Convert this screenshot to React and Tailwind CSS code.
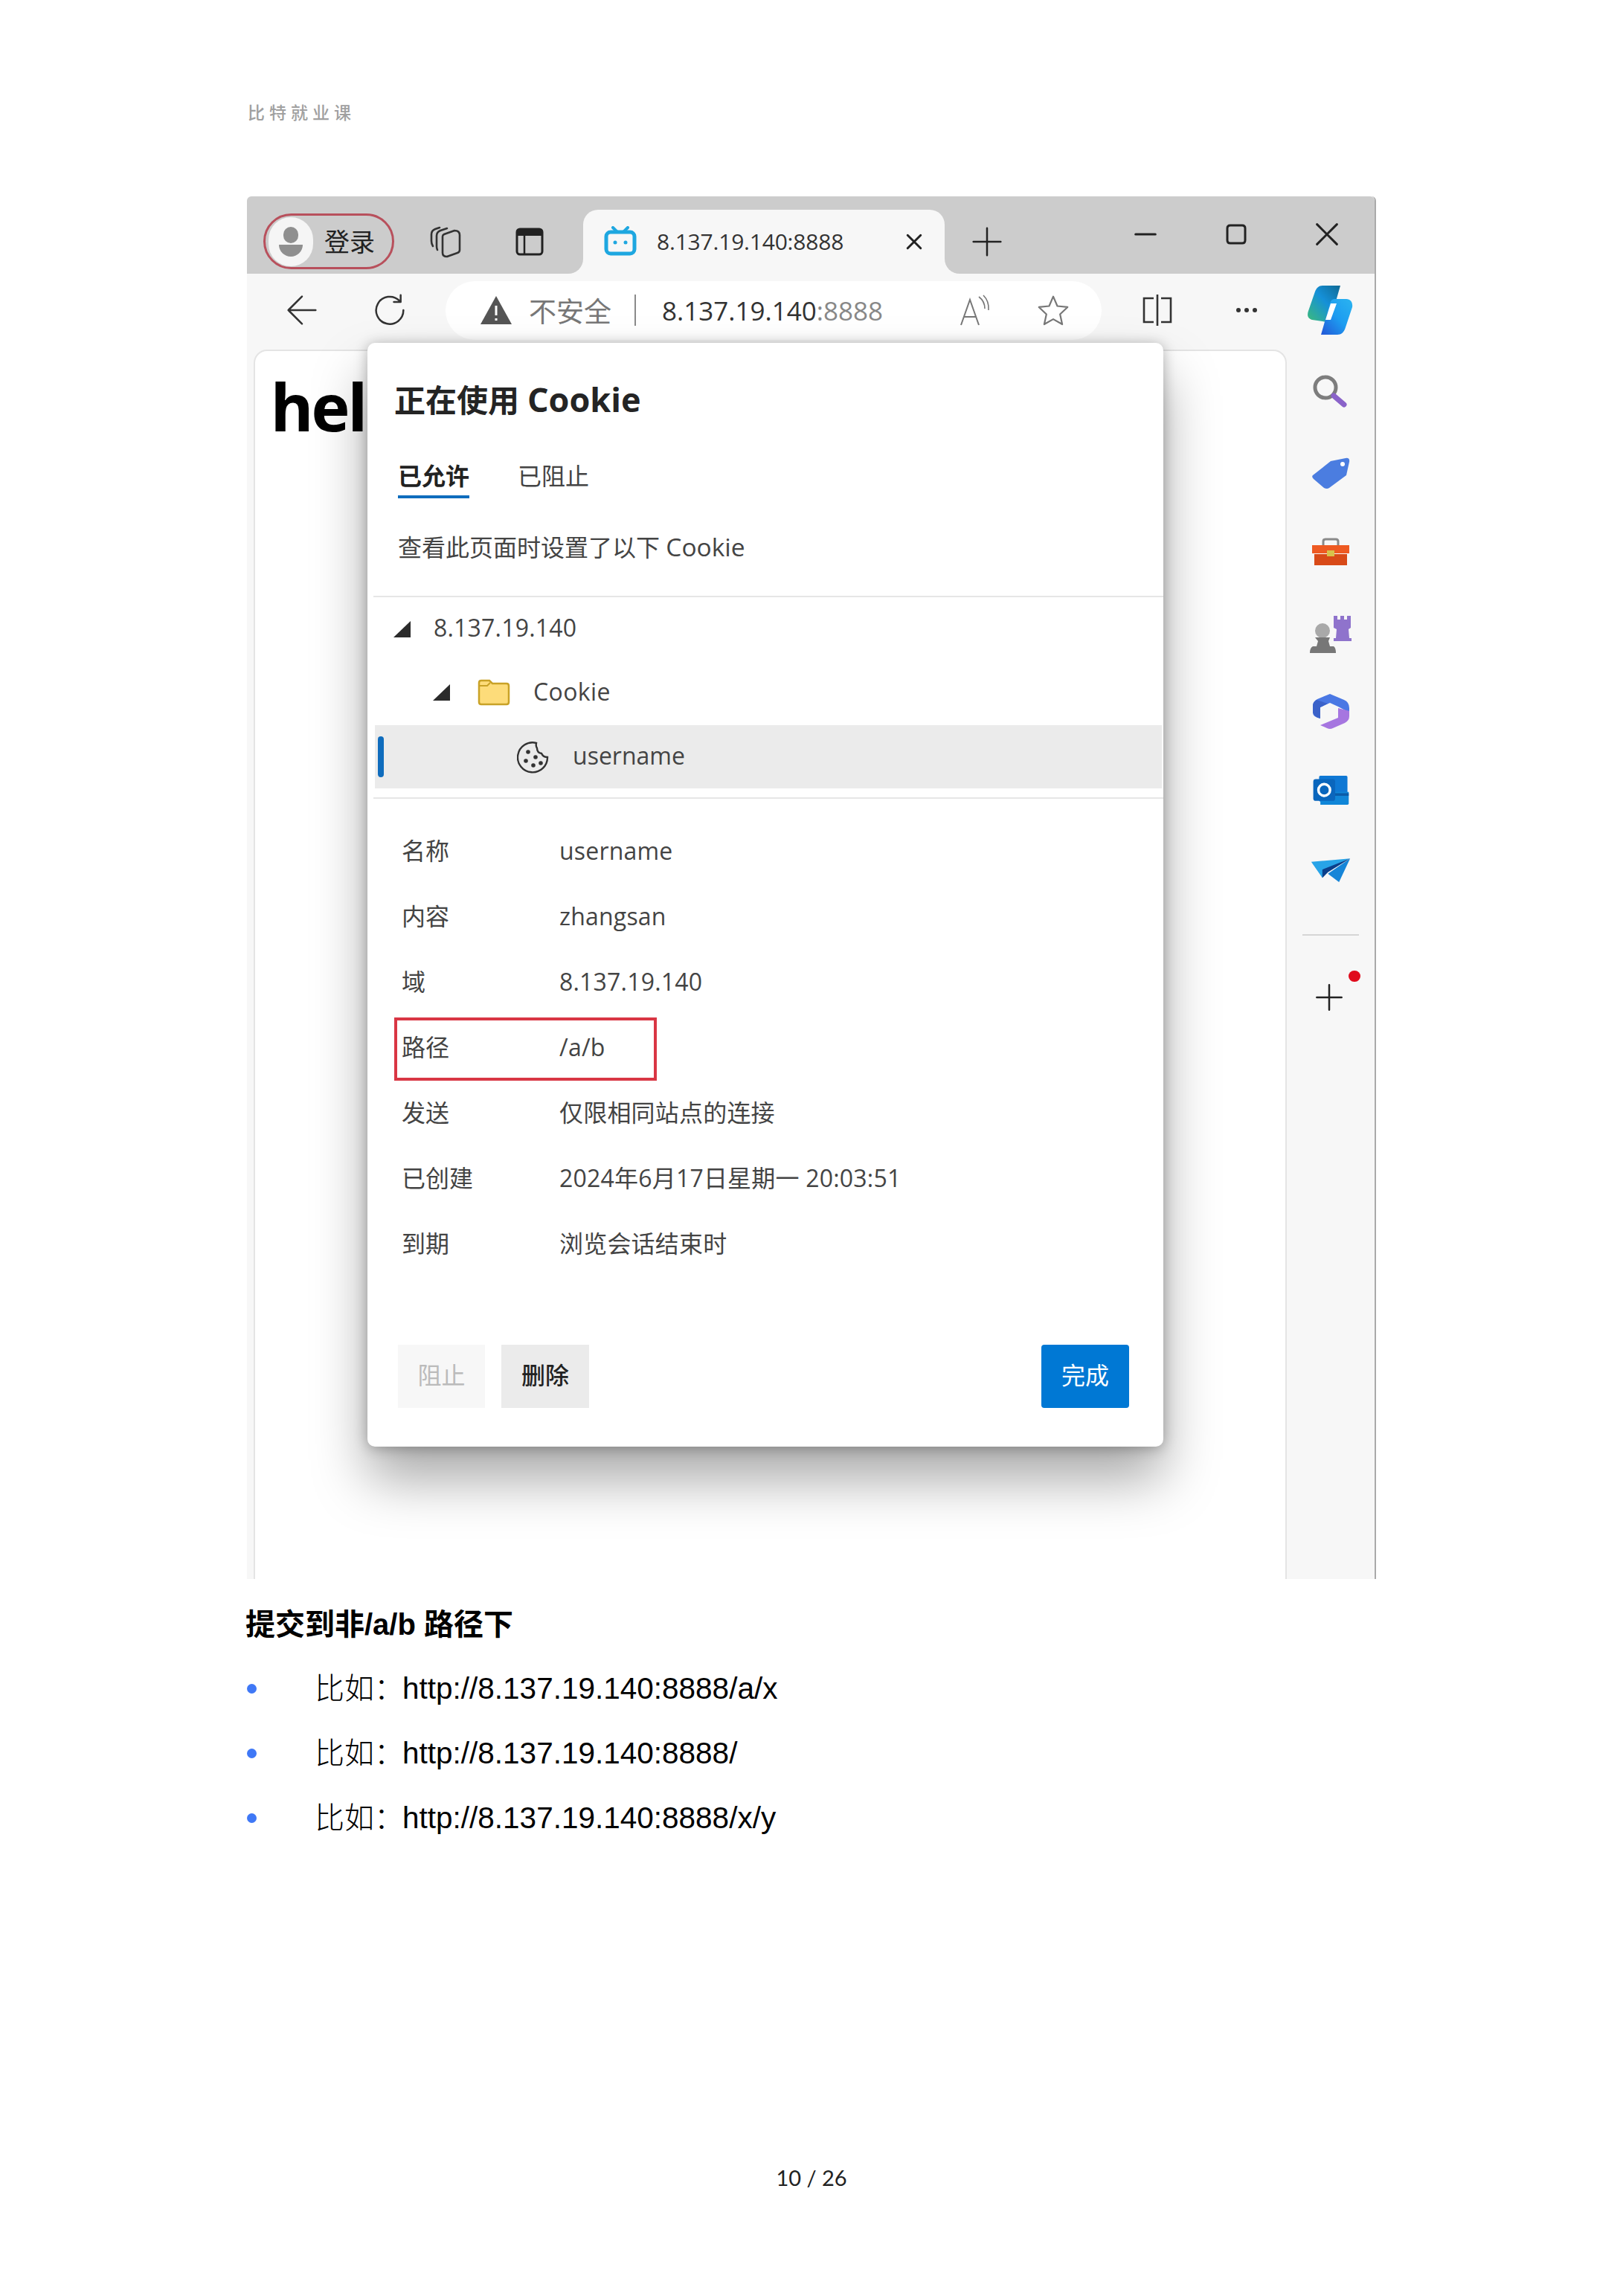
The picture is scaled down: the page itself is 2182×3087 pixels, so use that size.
import React from "react";

const Line = ({ d, size = 44, w = 2.5, color = "#333", box = 24 }) => (
  <svg width={size} height={size} viewBox={`0 0 ${box} ${box}`} fill="none" stroke={color} strokeWidth={w * (box / size)} strokeLinecap="round" strokeLinejoin="round" className="shrink-0">
    <path d={d} />
  </svg>
);

const Copilot = () => (
  <svg width="64" height="70" viewBox="0 0 64 70" className="shrink-0">
    <defs>
      <linearGradient id="cpA" x1="0" y1="1" x2="1" y2="0">
        <stop offset="0" stopColor="#3dbb7a" />
        <stop offset="0.55" stopColor="#1590d8" />
        <stop offset="1" stopColor="#0f6a94" />
      </linearGradient>
      <linearGradient id="cpB" x1="0" y1="1" x2="1" y2="0">
        <stop offset="0" stopColor="#2356d6" />
        <stop offset="0.5" stopColor="#1d9cf0" />
        <stop offset="1" stopColor="#2bb4f0" />
      </linearGradient>
    </defs>
    <path d="M22 2 H46 L34 44 C32 50 28 52 22 50 L8 48 C2 46 1 42 3 36 L12 10 C14 5 17 2 22 2 Z" fill="url(#cpA)" />
    <path d="M38 20 H54 C60 20 63 25 62 31 L53 58 C51 65 47 68 42 68 H20 L32 26 C33 22 35 20 38 20 Z" fill="url(#cpB)" />
    <path d="M33 26 L41 26 L33 48 L26 48 Z" fill="#fff" />
  </svg>
);

const SideIcons = () => [
  <svg key="search" width="56" height="56" viewBox="0 0 56 56">
    <circle cx="21" cy="21" r="14" fill="none" stroke="#7d7d7d" strokeWidth="5" />
    <path d="M32 32 L46 44" stroke="#8a63c9" strokeWidth="7" strokeLinecap="round" />
  </svg>,
  <svg key="tag" width="56" height="56" viewBox="0 0 56 56" className="mt-[2px]">
    <path d="M4 31 L28 12 L48 8 Q54 7 53 13 L49 31 L26 48 Q23 50 19 48 L5 36 Q2 33 4 31 Z" fill="#4b7de0" />
    <circle cx="44" cy="16" r="3" fill="#fff" />
  </svg>,
  <svg key="box" width="56" height="56" viewBox="0 0 56 56" className="mt-[4px]">
    <path d="M18 18 V12 Q18 9 21 9 H35 Q38 9 38 12 V18" fill="none" stroke="#8a8a8a" strokeWidth="3" />
    <path d="M3 17 H53 V28 H3 Z" fill="#ee5a22" />
    <path d="M6 29 H50 V44 H6 Z" fill="#d84a18" />
    <rect x="23" y="24" width="10" height="8" fill="#d8c24a" />
  </svg>,
  <svg key="chess" width="60" height="60" viewBox="0 0 60 60" className="mt-[6px]">
    <path d="M34 6 H39 V11 H43 V6 H48 V11 H52 V6 H57 V22 L54 24 L55 36 H58 V40 H34 V36 H37 L38 24 L34 22 Z" fill="#8f73cc" />
    <circle cx="19" cy="26" r="10" fill="#a9a9a9" />
    <path d="M9 35 H29 L27 40 L29 47 H34 Q37 49 37 56 H2 Q2 49 6 47 H11 L13 40 Z" fill="#777" />
  </svg>,
  <svg key="m365" width="56" height="56" viewBox="0 0 56 56">
    <path d="M27 5 L46 13 Q53 16 53 24 V30 L38 22 L27 17 L14 23 V38 Q4 36 4 30 V21 Q4 15 10 12 Z" fill="#4a78e4" />
    <path d="M4 30 Q6 36 14 38 L14 23 L24 18 L9 13 Q4 16 4 21 Z" fill="#3b62c9" />
    <path d="M53 28 V35 Q53 41 47 44 L31 51 Q27 53 23 51 L14 47 L38 37 V24 Z" fill="#a676e0" />
  </svg>,
  <svg key="outlook" width="52" height="52" viewBox="0 0 60 56">
    <rect x="12" y="5" width="44" height="40" rx="2" fill="#0f78d4" />
    <path d="M14 30 H58 V48 Q58 50 56 50 H14 Z" fill="#1086d8" />
    <path d="M30 32 L58 32 V36 L30 36 Z" fill="#0a5ca8" />
    <rect x="3" y="10" width="34" height="34" rx="4" fill="#0a66bd" />
    <ellipse cx="20" cy="27" rx="9" ry="9" fill="none" stroke="#fff" strokeWidth="4" />
  </svg>,
  <svg key="send" width="56" height="56" viewBox="0 0 60 56" className="mt-[2px]">
    <path d="M2 15 L58 10 L26 24 L18 38 Z" fill="#28a4e8" />
    <path d="M58 10 L42 44 L26 32 Z" fill="#1685d8" />
    <path d="M58 10 L18 26 L18 38 L26 30 Z" fill="#0b3f8a" />
  </svg>,
];

const Triangle = () => (
  <svg width="25" height="24" viewBox="0 0 25 24" className="shrink-0">
    <path d="M24 1 V23 H1 Z" fill="#2b2b2b" />
  </svg>
);

const detailRows = [
  ["名称", "username"],
  ["内容", "zhangsan"],
  ["域", "8.137.19.140"],
  ["路径", "/a/b"],
  ["发送", "仅限相同站点的连接"],
  ["已创建", "2024年6月17日星期一 20:03:51"],
  ["到期", "浏览会话结束时"],
];

const examples = ["http://8.137.19.140:8888/a/x", "http://8.137.19.140:8888/", "http://8.137.19.140:8888/x/y"];

export default function App() {
  return (
    <div className="w-[2182px] h-[3087px] bg-white flex flex-col font-['Liberation_Sans','Noto_Sans_CJK_SC',sans-serif] text-black overflow-hidden">
      <div className="ml-[333px] mt-[134px] h-[32px] leading-[32px] text-[23px] tracking-[6px] font-medium text-[#a0a0a0] font-['Noto_Sans_CJK_SC',sans-serif]">
        比特就业课
      </div>

      {/* browser screenshot */}
      <div className="relative ml-[332px] mt-[98px] w-[1518px] h-[1859px] flex flex-col bg-[#f7f7f7] border-r-2 border-[#aaaaaa] rounded-t-[6px] font-['Open_Sans','Noto_Sans_CJK_SC',sans-serif] text-[#333]">
        {/* tab strip */}
        <div className="h-[104px] shrink-0 flex items-start bg-[#cccccc] rounded-t-[6px]">
          <div className="ml-[22px] mt-[23px] w-[176px] h-[75px] rounded-full border-[3px] border-[#b8505c] flex items-center gap-[15px] pl-[4px]">
            <div className="w-[60px] h-[66px] rounded-full bg-[#f5f5f5] flex flex-col items-center justify-center gap-[2px]">
              <div className="w-[20px] h-[22px] rounded-full bg-[#8f8f8f]"></div>
              <div className="w-[32px] h-[16px] rounded-b-full bg-[#8f8f8f]"></div>
            </div>
            <span className="text-[34px] leading-none text-[#222]">登录</span>
          </div>

          <div className="ml-[47px] mt-[40px]">
            <svg width="46" height="44" viewBox="0 0 46 44" fill="none" stroke="#333" strokeWidth="2.6" strokeLinecap="round" strokeLinejoin="round">
              <path d="M18 14 Q18 12 20 11 L34 6 Q41 6 41 12 V32 Q41 35 38 36 L24 41 Q18 41 18 36 Z" />
              <path d="M11 32 Q10 30 10 27 V13 Q10 8 15 6 L24 3" />
              <path d="M5 27 Q3 24 3 20 V11 Q3 6 8 4 L14 2" />
            </svg>
          </div>
          <div className="ml-[69px] mt-[41px]">
            <svg width="40" height="40" viewBox="0 0 40 40">
              <rect x="3" y="3" width="34" height="34" rx="4" fill="none" stroke="#222" strokeWidth="3" />
              <path d="M3 7 Q3 3 7 3 H33 Q37 3 37 7 V12 H3 Z" fill="#222" />
              <path d="M13 12 V37" stroke="#222" strokeWidth="2.5" />
            </svg>
          </div>

          <div className="relative ml-[52px] mt-[18px] w-[486px] h-[86px] bg-[#f7f7f7] rounded-t-[20px] flex items-center">
            <div className="ml-[28px] mb-[2px]">
              <svg width="44" height="40" viewBox="0 0 44 40">
                <path d="M12 2 L18 8 M32 2 L26 8" stroke="#1ea7e0" strokeWidth="4" strokeLinecap="round" />
                <rect x="3" y="8" width="38" height="29" rx="6" fill="none" stroke="#1ea7e0" strokeWidth="5" />
                <circle cx="15" cy="22" r="2.5" fill="#1ea7e0" />
                <circle cx="29" cy="22" r="2.5" fill="#1ea7e0" />
              </svg>
            </div>
            <span className="ml-[27px] text-[30px] leading-none tracking-[-0.2px] text-[#333]">8.137.19.140:8888</span>
            <div className="ml-auto mr-[26px]">
              <Line size={30} w={3} color="#222" d="M5 5 L19 19 M19 5 L5 19" />
            </div>
            <div className="absolute left-[-20px] bottom-0 w-[20px] h-[20px] bg-[#f7f7f7]">
              <div className="w-full h-full bg-[#cccccc] rounded-br-[20px]"></div>
            </div>
            <div className="absolute right-[-20px] bottom-0 w-[20px] h-[20px] bg-[#f7f7f7]">
              <div className="w-full h-full bg-[#cccccc] rounded-bl-[20px]"></div>
            </div>
          </div>

          <div className="ml-[37px] mt-[41px]">
            <Line size={40} w={2.5} color="#222" d="M12 1 V23 M1 12 H23" />
          </div>
          <div className="ml-[177px] mt-[35px]">
            <Line size={32} w={3} color="#222" d="M2 12 H22" />
          </div>
          <div className="ml-[90px] mt-[35px]">
            <Line size={32} w={3} color="#222" d="M6 3 H18 Q21 3 21 6 V18 Q21 21 18 21 H6 Q3 21 3 18 V6 Q3 3 6 3 Z" />
          </div>
          <div className="ml-[90px] mt-[35px]">
            <Line size={32} w={3} color="#222" d="M2 2 L22 22 M22 2 L2 22" />
          </div>
        </div>

        {/* toolbar */}
        <div className="h-[102px] shrink-0 flex items-center pb-[4px]">
          <div className="ml-[52px]">
            <Line d="M22 12 H2 M12 2 L2 12 L12 22" w={2.5} />
          </div>
          <div className="ml-[74px]">
            <Line d="M19 5 A10 10 0 1 0 22 12 M20 1 V6 H15" w={2.5} />
          </div>
          <div className="ml-[53px] w-[882px] h-[79px] rounded-full bg-white flex items-center">
            <div className="ml-[46px]">
              <svg width="44" height="42" viewBox="0 0 44 40" className="shrink-0">
                <path d="M22 1 L43 39 H1 Z" fill="#555" />
                <path d="M22 14 V27 M22 31 V34" stroke="#fff" strokeWidth="3" />
              </svg>
            </div>
            <span className="ml-[22px] text-[37px] leading-none text-[#777] pt-[2px]">不安全</span>
            <div className="ml-[31px] w-[2px] h-[42px] bg-[#8a8a8a]"></div>
            <span className="ml-[35px] text-[35px] leading-none text-[#333]">
              8.137.19.140<span className="text-[#888]">:8888</span>
            </span>
            <div className="ml-auto flex items-center gap-[62px] pr-[43px]">
              <svg width="44" height="44" viewBox="0 0 44 44" fill="none" stroke="#777" strokeWidth="2">
                <path d="M4 42 L16 8 L28 42 M8 31 H24" />
                <path d="M28 4 Q36 10 36 20 M34 2 Q42 10 41 22" strokeWidth="1.6" />
              </svg>
              <Line d="M12 2 L15 9 L22.5 9.8 L17 15 L18.6 22.4 L12 18.6 L5.4 22.4 L7 15 L1.5 9.8 L9 9 Z" w={2.2} color="#777" />
            </div>
          </div>
          <div className="ml-[53px]">
            <svg width="44" height="44" viewBox="0 0 44 44" fill="none" stroke="#333" strokeWidth="2.6">
              <path d="M17 6 H4 V38 H17 M27 6 H40 V38 H27 M22 1 V43" />
            </svg>
          </div>
          <div className="ml-[78px] w-[40px] flex justify-center gap-[5px]">
            <div className="w-[6px] h-[6px] rounded-full bg-[#333]"></div>
            <div className="w-[6px] h-[6px] rounded-full bg-[#333]"></div>
            <div className="w-[6px] h-[6px] rounded-full bg-[#333]"></div>
          </div>
          <div className="ml-[60px]">
            <Copilot />
          </div>
        </div>

        {/* page + side bar */}
        <div className="flex-1 flex pl-[9px] min-h-0">
          <div className="w-[1389px] bg-white rounded-t-[18px] border-l-2 border-r-2 border-t-2 border-[#e4e4e4] pl-[21px] pt-[24px]">
            <div className="text-[88px] leading-[100px] tracking-[-3px] font-bold text-black font-['Noto_Sans',sans-serif]">hel</div>
          </div>
          <div className="w-[118px] flex flex-col items-center pt-[30px]">
            <div className="flex flex-col items-center gap-[51px]">
              {SideIcons().map((icon, i) => (
                <div key={i} className="h-[56px] flex items-center justify-center">
                  {icon}
                </div>
              ))}
            </div>
            <div className="mt-[58px] w-[76px] h-[2px] bg-[#d6d6d6]"></div>
            <div className="relative mt-[63px] mr-[4px]">
              <Line size={40} w={2.5} color="#222" d="M12 2 V22 M2 12 H22" />
              <div className="absolute left-[46px] top-[-16px] w-[16px] h-[15px] rounded-full bg-[#e00b1c]"></div>
            </div>
          </div>
        </div>

        {/* cookie dialog */}
        <div className="absolute left-[162px] top-[197px] w-[1070px] h-[1484px] bg-white rounded-[10px] shadow-[0_44px_72px_rgba(0,0,0,0.34),0_2px_18px_rgba(0,0,0,0.28)] flex flex-col">
          <div className="mt-[46px] ml-[36px] h-[60px] leading-[60px] text-[42px] font-semibold text-[#242424]">
            正在使用 <span className="text-[45px] font-bold">Cookie</span>
          </div>
          <div className="mt-[53px] ml-[41px] h-[50px] flex gap-[65px] text-[32px] leading-[40px]">
            <div className="w-[96px] h-[50px] border-b-[4px] border-[#0f6cbd] font-semibold text-[#222]">已允许</div>
            <div className="text-[#444]">已阻止</div>
          </div>
          <div className="mt-[45px] ml-[41px] h-[40px] leading-[40px] text-[32px] text-[#444]">
            查看此页面时设置了以下 <span className="text-[33.5px]">Cookie</span>
          </div>
          <div className="mt-[46px] ml-[8px] h-[2px] bg-[#e6e6e6]"></div>

          <div className="h-[85px] flex items-center text-[32px] text-[#444]">
            <div className="ml-[34px]">
              <Triangle />
            </div>
            <span className="ml-[30px] mb-[3px] tracking-[0.2px]">8.137.19.140</span>
          </div>
          <div className="h-[85px] flex items-center text-[32px] text-[#444]">
            <div className="ml-[87px]">
              <Triangle />
            </div>
            <svg width="44" height="38" viewBox="0 0 44 36" className="ml-[36px] shrink-0">
              <path d="M2 5 Q2 2 5 2 H16 L20 6 H39 Q42 6 42 9 V31 Q42 34 39 34 H5 Q2 34 2 31 Z" fill="#fddc7a" stroke="#c9a227" strokeWidth="2.5" />
              <path d="M2 9 H13 L17 5" fill="none" stroke="#c9a227" strokeWidth="2" />
            </svg>
            <span className="ml-[31px] mb-[2px] tracking-[0.4px]">Cookie</span>
          </div>
          <div className="relative mt-[2px] ml-[10px] mr-[2px] h-[85px] bg-[#ebebeb] flex items-center text-[32px] text-[#444]">
            <div className="absolute left-[4px] top-[15px] w-[8px] h-[55px] rounded-full bg-[#0f6cbd]"></div>
            <svg width="44" height="44" viewBox="0 0 44 44" className="ml-[191px] shrink-0" fill="none" stroke="#333" strokeWidth="2.4">
              <path d="M26 3 A20 20 0 1 0 41 22 Q35 22 33 17 Q27 16 27 10 Q25 7 26 3 Z" />
              <circle cx="15" cy="15" r="1.6" fill="#333" />
              <circle cx="25" cy="22" r="1.6" fill="#333" />
              <circle cx="12" cy="27" r="1.6" fill="#333" />
              <circle cx="22" cy="33" r="1.6" fill="#333" />
              <circle cx="32" cy="30" r="1.6" fill="#333" />
            </svg>
            <span className="ml-[31px] mb-[3px]">username</span>
          </div>
          <div className="mt-[12px] ml-[8px] h-[2px] bg-[#e6e6e6]"></div>

          <div className="mt-[26px] flex flex-col text-[32px] text-[#444]">
            {detailRows.map(([label, value]) => (
              <div key={label} className="relative h-[88px] flex items-center">
                <span className="ml-[46px] w-[212px] shrink-0">{label}</span>
                <span className="tracking-[0.2px]">{value}</span>
                {label === "路径" && (
                  <div className="absolute left-[36px] top-[4px] w-[353px] h-[85px] border-[4px] border-[#d93644]"></div>
                )}
              </div>
            ))}
          </div>

          <div className="mt-[92px] ml-[41px] mr-[46px] h-[85px] flex text-[32px] leading-[82px] text-center">
            <div className="w-[117px] bg-[#f7f7f7] text-[#bbb]">阻止</div>
            <div className="ml-[22px] w-[118px] bg-[#ebebeb] text-[#222] font-medium">删除</div>
            <div className="ml-auto w-[118px] rounded-[4px] bg-[#0078d4] text-white">完成</div>
          </div>
        </div>
      </div>

      <div className="ml-[330px] mt-[31px] h-[60px] leading-[60px] text-[40px] font-bold">提交到非/a/b 路径下</div>
      <div className="ml-[332px] mt-[26px] flex flex-col gap-[27px]">
        {examples.map((url) => (
          <div key={url} className="h-[60px] flex items-center leading-[60px]">
            <div className="w-[13px] h-[13px] rounded-full bg-[#3f78f6]"></div>
            <span className="ml-[78px] w-[118px] shrink-0 whitespace-nowrap text-[40px] font-light">比如：</span>
            <span className="text-[40.5px]">{url}</span>
          </div>
        ))}
      </div>

      <div className="mt-auto pb-[139px] h-[179px] leading-[40px] text-center text-[29px] text-[#222] font-['Lato',sans-serif]">10 / 26</div>
    </div>
  );
}
